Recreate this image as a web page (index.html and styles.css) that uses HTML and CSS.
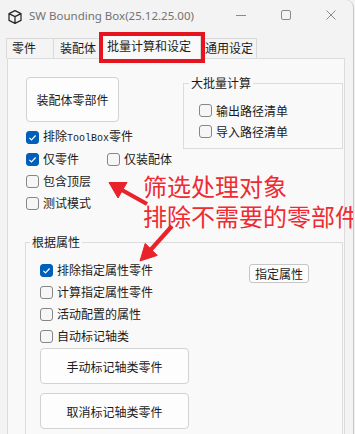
FILE: index.html
```html
<!DOCTYPE html>
<html lang="zh-CN">
<head>
<meta charset="utf-8">
<title>SW Bounding Box</title>
<link rel="stylesheet" href="styles.css">
</head>
<body>
<div class="window">
  <div class="titlebar">
    <svg class="app-icon" width="16" height="16" viewBox="0 0 16 16">
      <path d="M8 1.6 L14 4.6 V11.4 L8 14.4 L2 11.4 V4.6 Z M2 4.6 L8 7.6 L14 4.6 M8 7.6 V14.4" fill="none" stroke="#2b2b2b" stroke-width="1.3" stroke-linejoin="round"/>
    </svg>
    <span class="title">SW Bounding Box(25.12.25.00)</span>
    <div class="controls">
      <span class="ctl"><svg width="10" height="10" viewBox="0 0 10 10"><path d="M0 5.5 H10" stroke="#8a8a8a" stroke-width="1"/></svg></span>
      <span class="ctl"><svg width="10" height="10" viewBox="0 0 10 10"><rect x="0.5" y="0.5" width="9" height="9" rx="1.5" fill="none" stroke="#8a8a8a" stroke-width="1"/></svg></span>
      <span class="ctl"><svg width="10" height="10" viewBox="0 0 10 10"><path d="M0.5 0.5 L9.5 9.5 M9.5 0.5 L0.5 9.5" stroke="#8a8a8a" stroke-width="1"/></svg></span>
    </div>
  </div>

  <div class="tabs">
    <div class="tab t1">零件</div>
    <div class="tab t2">装配体</div>
    <div class="tab t3 active">批量计算和设定</div>
    <div class="tab t4">通用设定</div>
  </div>
  <div class="tab-highlight"></div>

  <div class="panel">
    <div class="top">
      <div class="leftcol">
        <button class="btn big-btn">装配体零部件</button>
        <div class="row first">
          <span class="cb checked"><svg viewBox="0 0 13 13"><path d="M3.4 6.9 L5.5 8.9 L9.6 4.5" fill="none" stroke="#fff" stroke-width="1.2"/></svg></span>
          <span class="lbl">排除<span class="mono">ToolBox</span>零件</span>
        </div>
        <div class="row">
          <div class="item w77">
            <span class="cb checked"><svg viewBox="0 0 13 13"><path d="M3.4 6.9 L5.5 8.9 L9.6 4.5" fill="none" stroke="#fff" stroke-width="1.2"/></svg></span>
            <span class="lbl">仅零件</span>
          </div>
          <div class="item">
            <span class="cb"></span>
            <span class="lbl">仅装配体</span>
          </div>
        </div>
        <div class="row">
          <span class="cb"></span>
          <span class="lbl">包含顶层</span>
        </div>
        <div class="row">
          <span class="cb"></span>
          <span class="lbl">测试模式</span>
        </div>
      </div>

      <fieldset class="group batch">
        <legend>大批量计算</legend>
        <div class="group-body batch-body">
          <div class="row r21">
            <span class="cb"></span>
            <span class="lbl">输出路径清单</span>
          </div>
          <div class="row r21">
            <span class="cb"></span>
            <span class="lbl">导入路径清单</span>
          </div>
        </div>
      </fieldset>
    </div>

    <fieldset class="group attr">
      <legend>根据属性</legend>
      <div class="group-body attr-body">
        <div class="row top-align">
          <div class="item w209">
            <span class="cb checked"><svg viewBox="0 0 13 13"><path d="M3.4 6.9 L5.5 8.9 L9.6 4.5" fill="none" stroke="#fff" stroke-width="1.2"/></svg></span>
            <span class="lbl">排除指定属性零件</span>
          </div>
          <button class="btn small-btn">指定属性</button>
        </div>
        <div class="row">
          <span class="cb"></span>
          <span class="lbl">计算指定属性零件</span>
        </div>
        <div class="row">
          <span class="cb"></span>
          <span class="lbl">活动配置的属性</span>
        </div>
        <div class="row">
          <span class="cb"></span>
          <span class="lbl">自动标记轴类</span>
        </div>
        <button class="btn wide-btn first-wide">手动标记轴类零件</button>
        <button class="btn wide-btn second-wide">取消标记轴类零件</button>
      </div>
    </fieldset>
  </div>

  <div class="annotation">
    <div class="note-line">筛选处理对象</div>
    <div class="note-line">排除不需要的零部件</div>
  </div>
  <svg class="arrows" width="355" height="434" viewBox="0 0 355 434">
    <g fill="#e8232b" stroke="#e8232b">
      <line x1="147" y1="204" x2="121" y2="189.5" stroke-width="4.2"/>
      <polygon points="109,182.5 127,182.5 118,198" stroke-width="1" stroke-linejoin="round"/>
      <line x1="172" y1="226" x2="151" y2="249.5" stroke-width="4.2"/>
      <polygon points="140,261 157.3,255.4 145.2,243.4" stroke-width="1" stroke-linejoin="round"/>
    </g>
  </svg>
</div>
</body>
</html>
```

FILE: styles.css
```css
* { box-sizing: border-box; }

html, body {
  margin: 0;
  padding: 0;
  background: #f2f2f2;
}

body {
  font-family: "Noto Sans CJK SC", "Noto Sans", sans-serif;
  font-size: 12px;
  color: #1b1b1b;
}

.window {
  position: relative;
  width: 354px;
  height: 434px;
  background: #f3f3f3;
  border-right: 1px solid #c9c9c9;
  border-top-right-radius: 8px;
  overflow: hidden;
}

/* Title bar */
.titlebar {
  height: 33px;
  display: flex;
  align-items: center;
}

.app-icon {
  margin-left: 7px;
  flex: none;
}

.title {
  margin-left: 6px;
  font-family: "Noto Sans", "Liberation Sans", sans-serif;
  font-size: 11.5px;
  color: #727272;
  line-height: 16px;
  margin-top: -2px;
}

.controls {
  margin-left: auto;
  display: flex;
  margin-right: 0;
  margin-top: -3px;
}

.ctl {
  width: 45px;
  height: 30px;
  display: flex;
  align-items: center;
  justify-content: center;
}

/* Tabs */
.tabs {
  height: 25px;
  display: flex;
  align-items: flex-end;
  padding-left: 6px;
}

.tab {
  height: 20px;
  line-height: 18px;
  border: 1px solid #d9d9d9;
  border-bottom: none;
  background: #f4f4f4;
  padding-left: 5px;
  white-space: nowrap;
  margin-right: -1px;
}

.t1 { width: 48px; }
.t2 { width: 47px; padding-left: 6px; }
.t3 { width: 102px; padding-left: 7px; }
.t4 { width: 57px; padding-left: 4px; }

.tab.active {
  height: 24px;
  line-height: 20px;
  margin-bottom: -1px;
  background: #f9f9f9;
  position: relative;
  z-index: 2;
}

.tab-highlight {
  position: absolute;
  left: 99px;
  top: 32px;
  width: 106px;
  height: 31px;
  border: 4px solid #e5141f;
  z-index: 5;
}

/* Panel */
.panel {
  margin-left: 7px;
  width: 338px;
  height: 380px;
  border: 1px solid #dcdcdc;
  background: #f9f9f9;
}

.top {
  display: flex;
  align-items: flex-start;
}

.leftcol {
  width: 175px;
  padding-left: 18px;
  margin-top: 18px;
}

.btn {
  font-family: "Noto Sans CJK SC", "Noto Sans", sans-serif;
  font-size: 12px;
  color: #1b1b1b;
  background: #fdfdfd;
  border: 1px solid #d2d2d2;
  border-radius: 4px;
  padding: 0;
  display: block;
}

.big-btn {
  width: 93px;
  height: 45px;
}

.row {
  display: flex;
  align-items: center;
  height: 22px;
  gap: 4px;
}

.row.first { margin-top: 4px; }
.row.r21 { height: 21px; }
.row.top-align { align-items: flex-start; gap: 0; }

.item {
  display: flex;
  align-items: center;
  gap: 4px;
  height: 22px;
}

.w77 { width: 77px; }
.w209 { width: 209px; }

.cb {
  width: 13px;
  height: 13px;
  flex: none;
  border: 1px solid #868686;
  border-radius: 3px;
  background: #f6f6f6;
  display: block;
}

.cb.checked {
  background: #005fb8;
  border-color: #005fb8;
}

.cb svg {
  display: block;
  width: 13px;
  height: 13px;
  margin: -1px;
}

.lbl {
  line-height: 16px;
  white-space: nowrap;
}

.mono {
  font-family: "Liberation Mono", "DejaVu Sans Mono", monospace;
  font-size: 10px;
}

/* Group boxes */
.group {
  margin: 0;
  padding: 0;
  border: 1px solid #dcdcdc;
  min-width: 0;
}

.group legend {
  font-size: 12px;
  line-height: 16px;
  padding: 0 2px;
  margin-left: 5px;
}

.batch {
  margin-top: 16px;
  width: 160px;
}

.batch-body {
  padding: 9px 0 6px 15px;
}

.attr {
  margin-top: 20px;
  margin-left: 17px;
  width: 318px;
}

.attr legend { margin-left: 4px; }

.attr-body {
  padding: 9px 0 30px 14px;
}

.small-btn {
  width: 60px;
  height: 19px;
  margin-top: 5px;
  border-radius: 3px;
  border-color: #c6c6c6;
  line-height: 17px;
}

.wide-btn {
  width: 149px;
  height: 36px;
}

.first-wide { margin-top: 1px; }
.second-wide { margin-top: 9px; }

/* Annotation overlay */
.annotation {
  position: absolute;
  left: 143px;
  top: 172px;
  font-size: 24px;
  color: #ef2b31;
  white-space: nowrap;
  z-index: 6;
  display: flex;
  flex-direction: column;
  gap: 3px;
}

.note-line {
  line-height: 27px;
  height: 27px;
}

.arrows {
  position: absolute;
  left: 0;
  top: 0;
  pointer-events: none;
  z-index: 7;
}
```
